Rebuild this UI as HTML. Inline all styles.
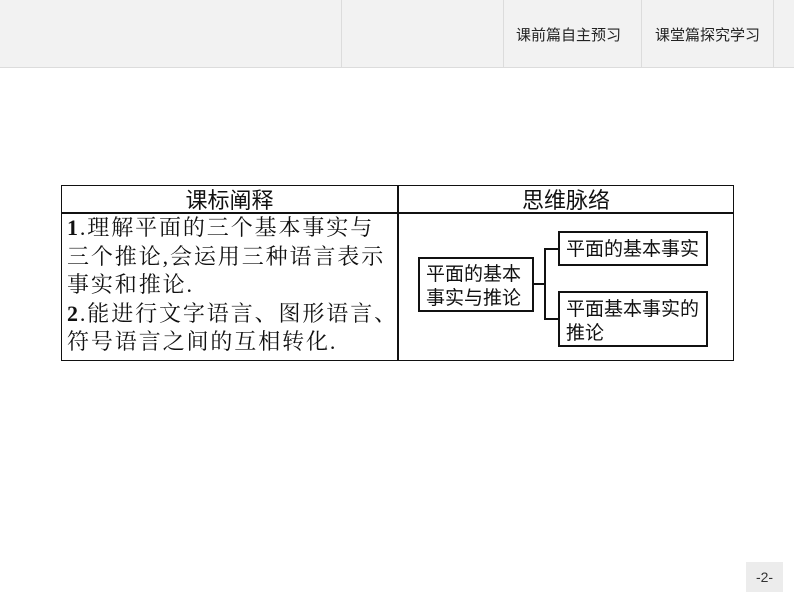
<!DOCTYPE html>
<html><head><meta charset="utf-8"><style>
body{margin:0;width:794px;height:596px;background:#fff;position:relative;overflow:hidden;font-family:"Liberation Serif","Noto Serif CJK SC",serif}
.hdr{position:absolute;left:0;top:0;width:794px;height:67px;background:#f2f2f2;border-bottom:1px solid #dcdcdc}
.vd{position:absolute;top:0;width:1px;height:67px;background:#dcdcdc}
.tab{position:absolute;top:24px;font:15px "Liberation Sans","Noto Sans CJK SC",sans-serif;color:#222}
.a{position:absolute;box-sizing:border-box}
.t{position:absolute;font-size:22px;color:#111;white-space:nowrap;letter-spacing:1.9px}
.bx{position:absolute;box-sizing:border-box;border:2px solid #111;font:19px "Noto Sans CJK SC",sans-serif;color:#111;line-height:24px}
.ln{position:absolute;background:#111}
</style></head><body>
<div class="hdr"></div>
<div class="vd" style="left:341px"></div>
<div class="vd" style="left:503px"></div>
<div class="vd" style="left:641px"></div>
<div class="vd" style="left:773px"></div>
<div class="tab" style="left:516px">课前篇自主预习</div>
<div class="tab" style="left:655px">课堂篇探究学习</div>

<div class="a" style="left:61px;top:185px;width:673px;height:176px;border:1.5px solid #111"></div>
<div class="ln" style="left:61px;top:212px;width:673px;height:1.5px"></div>
<div class="ln" style="left:397px;top:185px;width:1.5px;height:176px"></div>
<div class="t" style="left:61px;width:337px;text-align:center;top:186px;font-family:'Noto Sans CJK SC',sans-serif;font-size:22px;line-height:27px;letter-spacing:0">课标阐释</div>
<div class="t" style="left:398px;width:336px;text-align:center;top:186px;font-family:'Noto Sans CJK SC',sans-serif;font-size:22px;line-height:27px;letter-spacing:0">思维脉络</div>
<div class="t" style="left:67px;top:214px;line-height:28.6px"><b>1</b>.理解平面的三个基本事实与<br>三个推论,会运用三种语言表示<br>事实和推论.<br><b>2</b>.能进行文字语言、图形语言、<br>符号语言之间的互相转化.</div>

<div class="bx" style="left:418px;top:257px;width:116px;height:55px;padding:2px 0 0 6px">平面的基本<br>事实与推论</div>
<div class="bx" style="left:558px;top:231px;width:150px;height:35px;padding:3px 0 0 6px">平面的基本事实</div>
<div class="bx" style="left:558px;top:291px;width:150px;height:56px;padding:3px 0 0 6px">平面基本事实的<br>推论</div>
<div class="ln" style="left:534px;top:283px;width:12px;height:2px"></div>
<div class="ln" style="left:544px;top:248px;width:2px;height:72px"></div>
<div class="ln" style="left:544px;top:248px;width:14px;height:2px"></div>
<div class="ln" style="left:544px;top:318px;width:14px;height:2px"></div>

<div class="a" style="left:746px;top:562px;width:37px;height:30px;background:#ececec;font:14px 'Liberation Sans',sans-serif;color:#333;text-align:center;line-height:30px">-2-</div>
</body></html>
